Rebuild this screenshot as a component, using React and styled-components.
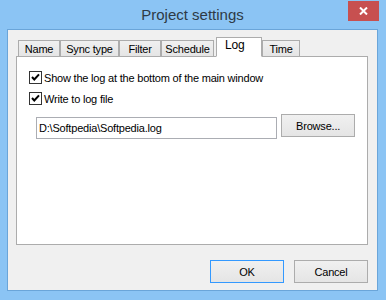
import styled, { createGlobalStyle } from "styled-components";

const GlobalStyle = createGlobalStyle`
  html, body {
    margin: 0;
    padding: 0;
  }
  body {
    font-family: "Liberation Sans", Arial, sans-serif;
    font-size: 11px;
    letter-spacing: -0.2px;
    color: #000000;
  }
`;

const tabs = [
  { label: "Name", width: 42 },
  { label: "Sync type", width: 59 },
  { label: "Filter", width: 42 },
  { label: "Schedule", width: 53 },
  { label: "Log", width: 46, active: true },
  { label: "Time", width: 38 },
];

const CloseIcon = () => (
  <svg width="9" height="8" viewBox="0 0 9 8">
    <path d="M1 0.5 L8 7.5 M8 0.5 L1 7.5" stroke="#ffffff" strokeWidth="2" />
  </svg>
);

export default function App() {
  return (
    <>
      <GlobalStyle />
      <Frame>
        <TitleBar>
          <span />
          <Title>Project settings</Title>
          <CloseButton>
            <CloseIcon />
          </CloseButton>
        </TitleBar>
        <Client>
          <TabRow>
            {tabs.map((t) => (
              <Tab key={t.label} $width={t.width} $active={t.active}>
                {t.label}
              </Tab>
            ))}
          </TabRow>
          <Panel>
            <CheckRow>
              <Check />
              <span>Show the log at the bottom of the main window</span>
            </CheckRow>
            <CheckRow>
              <Check />
              <span>Write to log file</span>
            </CheckRow>
            <FileRow>
              <PathInput>D:\Softpedia\Softpedia.log</PathInput>
              <Button>Browse...</Button>
            </FileRow>
          </Panel>
          <Footer>
            <Button $default>OK</Button>
            <Button>Cancel</Button>
          </Footer>
        </Client>
      </Frame>
    </>
  );
}

const Check = () => (
  <CheckBox>
    <svg width="11" height="11" viewBox="0 0 11 11">
      <path d="M2 5 L4.3 7.5 L9 2.3" stroke="#000" strokeWidth="2" fill="none" />
    </svg>
  </CheckBox>
);

const Frame = styled.div`
  width: 386px;
  height: 300px;
  box-sizing: border-box;
  background: #8bc4f4;
  padding: 0 8px 9px 7px;
  display: flex;
  flex-direction: column;
`;

const TitleBar = styled.div`
  height: 31px;
  display: grid;
  grid-template-columns: 1fr auto 1fr;
  align-items: start;
`;

const Title = styled.div`
  font-size: 15px;
  letter-spacing: 0;
  color: #2e3a45;
  line-height: 18px;
  margin-top: 6px;
`;

const CloseButton = styled.div`
  justify-self: end;
  margin-top: 1px;
  margin-right: -1px;
  width: 31px;
  height: 20px;
  background: #c75050;
  display: flex;
  align-items: center;
  justify-content: center;
`;

const Client = styled.div`
  flex: 1;
  border: 1px solid #6aa5d9;
  background: #f0f0f0;
  padding: 7px 9px 7px 8px;
  display: flex;
  flex-direction: column;
`;

const TabRow = styled.div`
  display: flex;
  align-items: flex-end;
  height: 20px;
  padding-left: 2px;
  margin-bottom: -1px;
  position: relative;
  z-index: 1;
`;

const Tab = styled.div`
  box-sizing: border-box;
  width: ${(p) => p.$width}px;
  height: ${(p) => (p.$active ? 20 : 17)}px;
  margin-left: ${(p) => (p.$active ? 2 : 0)}px;
  border: 1px solid #acacac;
  border-bottom: ${(p) => (p.$active ? "1px solid #ffffff" : "1px solid #acacac")};
  background: ${(p) =>
    p.$active ? "#ffffff" : "linear-gradient(#f0f0f0, #e5e5e5)"};
  font-size: ${(p) => (p.$active ? 12 : 11)}px;
  line-height: ${(p) => (p.$active ? 14 : 16)}px;
  padding-left: ${(p) => (p.$active ? 8 : 0)}px;
  text-align: ${(p) => (p.$active ? "left" : "center")};
  white-space: nowrap;
`;

const Panel = styled.div`
  height: 189px;
  box-sizing: border-box;
  background: #ffffff;
  border: 1px solid #acacac;
  padding: 14px 12px 0 12px;
  display: flex;
  flex-direction: column;
`;

const CheckRow = styled.div`
  display: flex;
  align-items: center;
  gap: 2px;
  height: 13px;
  margin-bottom: 8px;
  white-space: nowrap;
`;

const CheckBox = styled.div`
  width: 13px;
  height: 13px;
  box-sizing: border-box;
  border: 1px solid #333333;
  background: #ffffff;
  display: flex;
  align-items: center;
  justify-content: center;
`;

const FileRow = styled.div`
  display: flex;
  align-items: flex-start;
  gap: 4px;
  margin-left: 7px;
  margin-top: 1px;
`;

const PathInput = styled.div`
  width: 242px;
  height: 22px;
  margin-top: 3px;
  box-sizing: border-box;
  border: 1px solid #abadb3;
  background: #ffffff;
  padding-left: 2px;
  line-height: 20px;
`;

const Button = styled.div`
  width: 74px;
  height: 23px;
  box-sizing: border-box;
  border: 1px solid ${(p) => (p.$default ? "#3399ff" : "#acacac")};
  background: linear-gradient(#f0f0f0, #e5e5e5);
  display: flex;
  align-items: center;
  justify-content: center;
`;

const Footer = styled.div`
  display: flex;
  justify-content: flex-end;
  gap: 10px;
  margin-top: 15px;
`;
